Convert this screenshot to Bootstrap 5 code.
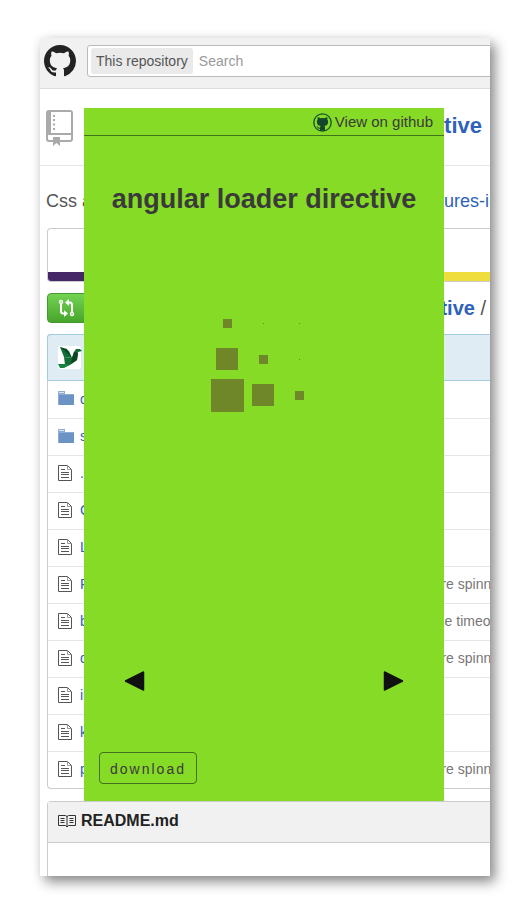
<!DOCTYPE html>
<html lang="en">
<head>
<meta charset="utf-8">
<meta name="viewport" content="width=device-width, initial-scale=1">
<title>angular loader directive</title>
<link href="https://cdn.jsdelivr.net/npm/bootstrap@5.3.0/dist/css/bootstrap.min.css" rel="stylesheet">
<style>
body{font-family:"Liberation Sans",Arial,sans-serif;background:#fff;color:#555;padding:38px 40px}
a{text-decoration:none;color:#2e62b8}
svg{display:block;flex:none}
.page{box-shadow:5px 6px 12px rgba(0,0,0,.45),0 0 10px rgba(0,0,0,.05);background:#fff}
.topbar{background:#f1f1f1;border-bottom:1px solid #ddd;height:51px;padding:0 0 4px 4px;gap:11px}
.searchbox{height:32px;border:1px solid #b9bcbc;border-radius:3px;margin-right:-8px;padding:2px 3px;font-size:14px;background:#fff}
.scope{background:#eaeaea;border-radius:3px;height:26px;line-height:26px;padding:0 5px;color:#555}
.searchbox input{font-size:14px;border:0;padding:0 6px;color:#555;outline:0;width:100%;background:none;line-height:20px;height:24px}
.searchbox input::placeholder{color:#999;opacity:1}
.repohead{height:77px;border-bottom:1px solid #e5e5e5;padding:0 8px 3px 6px;font-size:22px}
.repohead svg{margin-top:4px}
.content{padding-left:7px}
.desc{font-size:18px;height:62px;padding-top:8px;margin-left:-1px}
.desc a{width:76px;flex:none}
.stats{height:54px;border:1px solid #ccc;border-right:0;border-radius:4px 0 0 4px}
.langs{height:9px}
.lang-a{background:#452768}.lang-b{background:#eedd3c}
.actions{height:30px;margin:11px 0;font-size:20px;padding-right:4px}
.compare{height:30px;width:42px;border:1px solid #459a2f;border-radius:4px;background:linear-gradient(#72d352,#48a52c);padding:0 0 0 10px}
.files{border:1px solid #ccc;border-right:0;border-radius:4px 0 0 4px;font-size:14px}
.commit{height:47px;background:#e0ecf4;border:1px solid #a4cce0;border-right:0;border-radius:4px 0 0 0;margin:-1px 0 0 -1px;padding-left:10px}
.filetable{width:100%;margin:0;table-layout:fixed;color:#777}
.filetable td{height:37px;padding:0;border-bottom:1px solid #e5e5e5;white-space:nowrap;vertical-align:middle}
.filetable tr:last-child td{border-bottom:0}
.filetable .ic{width:32px;padding:0 0 2px 10px}
.filetable .msg{width:68px}
.readme{margin-top:12px;border:1px solid #ccc;border-width:1px 0 0 1px;border-radius:4px 0 0 0}
.readme h2{font-size:16px;height:41px;background:#f1f1f1;border-bottom:1px solid #ccc;color:#222;padding:0 0 2px 10px;gap:5px}
.readme-body{height:33px}
.demo{position:absolute;top:70px;left:44px;right:46px;bottom:75px;background:#86db27;color:#3a3a3a}
.demo-top{height:28px;border-bottom:1px solid #3f741a;padding:1px 11px 0 0;font-size:15px}
.demo-top a{color:#3a3a3a;gap:3px}
.demo h1{font-size:27px;line-height:34px;margin:46px 0 0;white-space:nowrap}
.loader{grid-template-columns:repeat(3,36px);grid-template-rows:repeat(3,36px);margin:89px 0 0 -2px}
.loader i{display:block;background:#6f8729}
.s1{width:1px;height:1px}.s9{width:9px;height:9px}.s22{width:22px;height:22px}.s33{width:33px;height:33px}
.arrows{padding:0 40px;margin-bottom:60px}
.arrows button,.demo .get{background:none;border:0;padding:0}
.demo .get{border:1px solid #43701f;border-radius:4px;height:32px;line-height:32px;padding:0 9px;margin:0 0 17px 15px;font-size:14px;letter-spacing:2px;color:#3a3a3a;min-width:98px}
</style>
<script src="https://cdn.jsdelivr.net/npm/bootstrap@5.3.0/dist/js/bootstrap.bundle.min.js"></script>
</head>
<body>
<svg width="0" height="0" class="position-absolute" aria-hidden="true">
  <defs>
    <symbol id="file" viewBox="0 0 14 16"><path d="M.5.5h9l4 4v11H.5z" fill="#fff" stroke="#555"/><path d="M9.500.5v4h4" fill="none" stroke="#999"/><path d="M3 4.500h4M3 7.500h8M3 9.500h8M3 12.500h8" stroke="#555"/></symbol>
    <symbol id="folder" viewBox="0 0 16 14"><path d="M0 1q0-1 1-1h6v3h9v11H0z" fill="#8fabd3"/><path d="M1 1h5v1H1z" fill="#dce6f3"/><path d="M1 4h15v10H1z" fill="#6c93c6"/></symbol>
  </defs>
</svg>
<div class="page position-relative">
 <div class="overflow-hidden">
  <header class="topbar d-flex align-items-center">
    <a href="#" aria-label="GitHub"><svg width="32" height="32" viewBox="0 0 16 16" fill="#222"><path d="M8 0C3.580 0 0 3.580 0 8c0 3.540 2.290 6.530 5.470 7.590.4.070.55-.17.55-.38 0-.19-.01-.82-.01-1.490-2.010.37-2.530-.49-2.690-.94-.09-.23-.48-.94-.82-1.130-.28-.15-.68-.52-.01-.53.63-.01 1.080.58 1.230.82.72 1.210 1.870.87 2.330.66.07-.52.28-.87.51-1.070-1.780-.2-3.640-.89-3.640-3.950 0-.87.31-1.590.82-2.150-.08-.2-.36-1.020.08-2.120 0 0 .67-.21 2.200.82.64-.18 1.320-.27 2-.27s1.360.09 2 .27c1.530-1.040 2.200-.82 2.200-.82.44 1.100.16 1.920.08 2.120.51.56.82 1.270.82 2.150 0 3.070-1.870 3.750-3.650 3.950.29.25.54.73.54 1.480 0 1.070-.01 1.930-.01 2.200 0 .21.15.46.55.38A8.010 8.010 0 0 0 16 8c0-4.420-3.580-8-8-8z"/></svg></a>
    <form class="searchbox d-flex flex-grow-1 align-items-center">
      <label class="scope text-nowrap" for="q">This repository</label>
      <input id="q" type="text" placeholder="Search">
    </form>
  </header>
  <div class="repohead d-flex align-items-center">
    <svg width="28" height="36" viewBox="0 0 28 36"><path d="M3 0h21q3 0 3 3v26q0 3-3 3H14v4l-3.500-3L7 36v-4H3q-3 0-3-3V3q0-3 3-3z" fill="#aaa"/><path d="M5 2h20v21H5zM2 25h23v4q0 1-1 1H14v-3H7v3H3q-1 0-1-1z" fill="#fff"/><path d="M7 5h2v2H7zm0 4h2v2H7zm0 4.500h2v2H7zm0 4.500h2v2H7z" fill="#aaa"/></svg>
    <a href="#" class="fw-bold ms-auto">tive</a>
  </div>
  <main class="content">
    <div class="desc d-flex justify-content-between align-items-center text-nowrap"><span>Css and</span><a href="#">features-in</a></div>
    <div class="stats d-flex flex-column justify-content-end overflow-hidden"><div class="langs d-flex"><div class="lang-a w-50"></div><div class="lang-b w-50"></div></div></div>
    <div class="actions d-flex align-items-center justify-content-between">
      <button type="button" class="compare" aria-label="Compare"><svg width="18" height="20" viewBox="0 0 18 20" fill="none" stroke="#fff" stroke-width="2"><circle cx="3" cy="4" r="1.500" stroke-width="1.400"/><path d="M3 6v7q0 2.500 2 2.500h1"/><path d="M6 12l4 3.500L6 19z" fill="#fff" stroke="none"/><circle cx="14" cy="16" r="1.500" stroke-width="1.400"/><path d="M14 14V7q0-2.500-2-2.500h-1"/><path d="M11 1L7 4.500 11 8z" fill="#fff" stroke="none"/></svg></button>
      <span class="text-nowrap"><a href="#" class="fw-bold">directive</a> /</span>
    </div>
    <div class="files">
      <div class="commit d-flex align-items-center"><svg width="24" height="24" viewBox="0 0 24 24"><rect width="23" height="23" rx="3" fill="#fff"/><path d="M2 1l9 4 3 7-8-1z" fill="#0f6f36"/><path d="M6 11l8 1 2-6 2-3 4 0 2 2-4 1-1 8-7 5-5 0z" fill="#146b35"/><path d="M14 12l2-6 4 1-1 7-6 4z" fill="#0b4522"/><path d="M0 18l7 0 5 1-6 3-4 0z" fill="#178343"/><path d="M2 1l7 6 5 5-5-9z" fill="#084a25"/></svg></div>
      <table class="filetable">
        <tr><td class="ic"><svg width="16" height="14"><use href="#folder"/></svg></td><td><a href="#">dist</a></td><td class="msg"></td></tr>
        <tr><td class="ic"><svg width="16" height="14"><use href="#folder"/></svg></td><td><a href="#">src</a></td><td class="msg"></td></tr>
        <tr><td class="ic"><svg width="14" height="16"><use href="#file"/></svg></td><td><a href="#">.gitignore</a></td><td class="msg"></td></tr>
        <tr><td class="ic"><svg width="14" height="16"><use href="#file"/></svg></td><td><a href="#">Gruntfile.js</a></td><td class="msg"></td></tr>
        <tr><td class="ic"><svg width="14" height="16"><use href="#file"/></svg></td><td><a href="#">LICENSE</a></td><td class="msg"></td></tr>
        <tr><td class="ic"><svg width="14" height="16"><use href="#file"/></svg></td><td><a href="#">README.md</a></td><td class="msg">more spinners</td></tr>
        <tr><td class="ic"><svg width="14" height="16"><use href="#file"/></svg></td><td><a href="#">bower.json</a></td><td class="msg">base timeout</td></tr>
        <tr><td class="ic"><svg width="14" height="16"><use href="#file"/></svg></td><td><a href="#">demo.html</a></td><td class="msg">more spinners</td></tr>
        <tr><td class="ic"><svg width="14" height="16"><use href="#file"/></svg></td><td><a href="#">index.html</a></td><td class="msg"></td></tr>
        <tr><td class="ic"><svg width="14" height="16"><use href="#file"/></svg></td><td><a href="#">karma.js</a></td><td class="msg"></td></tr>
        <tr><td class="ic"><svg width="14" height="16"><use href="#file"/></svg></td><td><a href="#">p</a></td><td class="msg">more spinners</td></tr>
      </table>
    </div>
    <section class="readme">
      <h2 class="d-flex align-items-center fw-bold mb-0"><svg width="18" height="14" viewBox="0 0 18 14" fill="none" stroke="#333"><path d="M.5 1.500h7l1.500 1 1.500-1h7v10h-7L9 13l-1.500-1.500h-7zM9 2v11"/><path d="M2.500 4.500h4M2.500 6.500h4M2.500 8.500h4M11.500 4.500h4M11.500 6.500h4M11.500 8.500h4"/></svg>README.md</h2>
      <div class="readme-body"></div>
    </section>
  </main>
 </div>
 <section class="demo d-flex flex-column">
  <div class="demo-top d-flex justify-content-end align-items-center">
    <a href="#" class="d-flex align-items-center"><svg width="19" height="19" viewBox="0 0 19 19"><circle cx="9.500" cy="9.500" r="8.700" fill="none" stroke="#14502a" stroke-width="1.300"/><path d="M4.800 4.200q1.400 0 2.600 1 2.100-.5 4.200 0 1.200-1 2.600-1 .5 1.200.1 2.300 1 1.200.8 3-.3 3-3.600 3.500.5.600.5 1.500v3.300H7v-2q-2 .2-2.700-1.500l-1-1.200q1.200-.1 1.900 1.100.7.700 1.900.4 0-1 .5-1.600Q4.200 12.500 3.900 9.500q-.2-1.800.8-3-.4-1.100.1-2.300z" fill="#14452d"/></svg>View on github</a>
  </div>
  <h1 class="text-center fw-bold">angular loader directive</h1>
  <div class="loader d-grid justify-content-center" aria-hidden="true">
    <i class="s9 m-auto"></i><i class="s1 m-auto"></i><i class="s1 m-auto"></i>
    <i class="s22 m-auto"></i><i class="s9 m-auto"></i><i class="s1 m-auto"></i>
    <i class="s33 m-auto"></i><i class="s22 m-auto"></i><i class="s9 m-auto"></i>
  </div>
  <div class="arrows d-flex justify-content-between mt-auto">
    <button type="button" aria-label="Previous"><svg width="21" height="22" viewBox="0 0 21 22"><path d="M1.500 11L19.500 2v18z" fill="#111" stroke="#111" stroke-width="1.500" stroke-linejoin="round"/></svg></button>
    <button type="button" aria-label="Next"><svg width="21" height="22" viewBox="0 0 21 22"><path d="M19.500 11L1.500 2v18z" fill="#111" stroke="#111" stroke-width="1.500" stroke-linejoin="round"/></svg></button>
  </div>
  <div class="d-flex"><button type="button" class="get">download</button></div>
 </section>
</div>
</body>
</html>
